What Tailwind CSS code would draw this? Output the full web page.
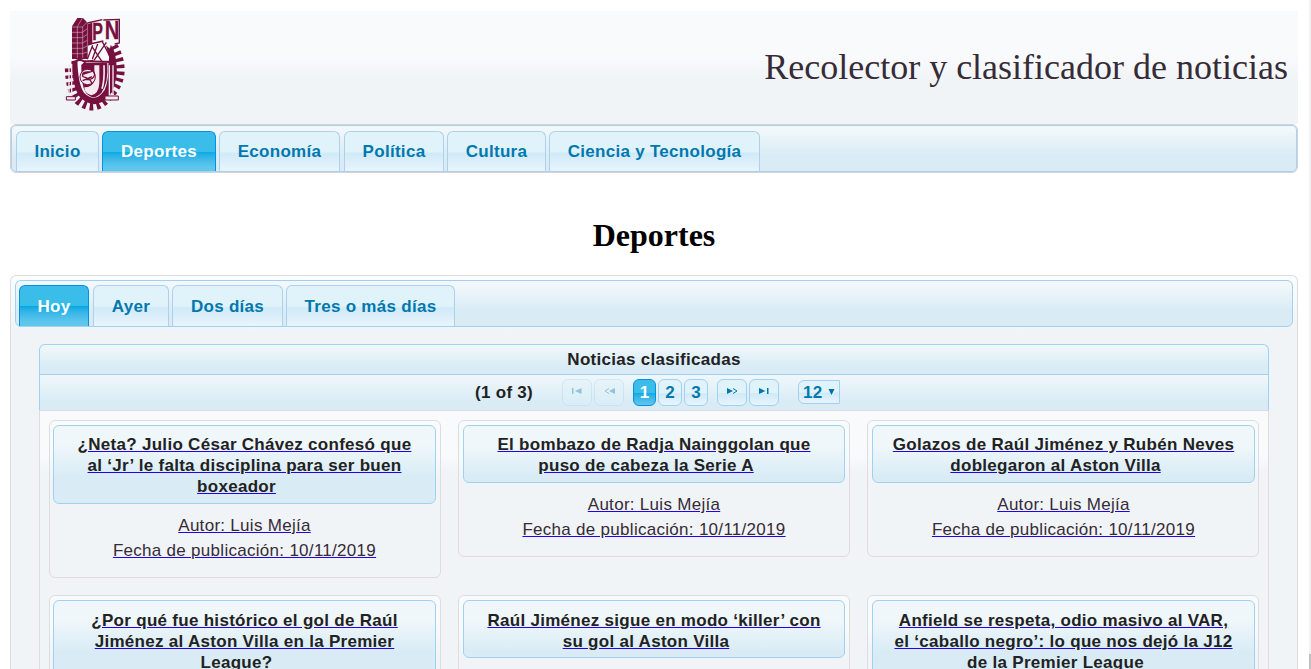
<!DOCTYPE html>
<html lang="es"><head><meta charset="utf-8"><title>Recolector y clasificador de noticias</title>
<script src="https://cdn.jsdelivr.net/npm/@tailwindcss/browser@4"></script></head>
<body class="bg-white w-[1311px] h-[669px] overflow-hidden relative font-['Liberation_Sans',Arial,sans-serif] text-[17px] tracking-[0.29px] text-[#362b36]">
<div class="absolute right-0 top-0 w-[2px] h-full bg-[#f1f1f1]"><div class="mt-[654px] h-[15px] bg-[#c1c1c1]"></div></div>
<div class="ml-[10px] w-[1288px] pt-[11px]">
<header class="h-[113px] flex justify-between bg-linear-to-b from-[#f9fafc] from-40% to-[#f0f4f7] to-62% pl-[40px] pr-[10px]">
<svg class="w-[90px] h-[112px] -mt-[3px] tracking-normal" viewBox="0 0 270 336" fill="none" stroke="#76103f" stroke-width="4">
<path d="M190 114Q236 200 178 262Q136 318 84 276Q60 250 58 180" stroke-width="27" stroke-dasharray="10 10"/>
<path d="M182 110Q196 126 199 165Q207 215 180 262Q136 312 90 268Q68 240 64 160L82 156Q84 230 102 254Q136 288 164 246Q176 220 175 170Z" fill="#76103f" stroke="none"/>
<path d="M160 36L208 34V105L194 108M112 45L157 35M120 108L160 99M128 112L112 154M143 108L127 154M156 99L183 152M126 116L158 164M169 103L132 157" stroke-width="4"/>
<path d="M168 112L190 132L178 150Z" fill="#76103f" stroke="none"/>
<path d="M101 165H172Q176 225 154 255Q130 280 108 255Q92 230 94 170Z" fill="#76103f" stroke="none"/>
<path d="M133 172H148V226Q146 258 124 262Q102 256 103 238Q126 238 133 220Z" fill="#f5eaf0" stroke="none"/>
<path d="M162 172Q164 220 156 242" stroke="#f5eaf0" stroke-width="5"/>
<circle cx="113" cy="207" r="23" fill="#f5eaf0" stroke-width="3"/>
<path d="M130 158Q92 160 103 176Q134 185 134 200Q130 218 106 214M119 192Q92 190 99 206Q122 212 125 225M96 200L126 190M98 218L126 206" stroke-width="4"/>
<path d="M75 163Q84 150 103 160L188 162" stroke-width="6"/>
<path d="M57 168V268M65 168V266M178 172V268M189 172V268" stroke="#f5eaf0" stroke-width="4"/>
<path d="M49 266H76V276H49ZM165 264H205V276H165Z" fill="#f5eaf0" stroke-width="3"/>
<path d="M66 55L82 30H99L113 45V153H66Z" fill="#76103f" stroke="none"/>
<path d="M66 57H97L112 42M66 73H97L112 62M66 89H97L112 79M66 105H97L112 97M66 121H97L112 114M66 137H97L112 132M82 57V150M98 57V150M82 56L97 30" stroke="#e5cddb" stroke-width="1.500"/>
<path d="M114 48L127 44V108L114 113Z" fill="#76103f" stroke="none"/>
<text x="127" y="96" font-family="Liberation Sans" font-weight="bold" font-size="74" fill="#76103f" stroke="#76103f" stroke-width="1" textLength="32" lengthAdjust="spacingAndGlyphs">P</text>
<text x="164" y="94" font-family="Liberation Sans" font-weight="bold" font-size="80" fill="#76103f" stroke="#76103f" stroke-width="1" textLength="44" lengthAdjust="spacingAndGlyphs">N</text>
</svg>
<div class="mt-[34px] text-[36px] leading-[45px] tracking-normal whitespace-nowrap font-['Liberation_Serif',serif]">Recolector y clasificador de noticias</div>
</header>
<nav class="h-[49px] rounded-[6px] border border-[#d0d3d7]"><div class="h-[47px] rounded-[5px] border border-[#aed0ea] bg-linear-to-b from-[#f1f7fa] from-10% to-[#d9ecf6] to-65% pl-[4px] pt-[5px] flex items-start font-bold leading-[20px] text-[#0078ae]">
<div class="w-[83px] mr-[3px] h-[40px] pt-[10px] text-center rounded-t-[6px] border border-b-0 border-[#aed0ea] bg-linear-to-b from-[#e0f3fa] from-50% via-[#d0eaf8] via-55% to-[#e8f4fc]">Inicio</div>
<div class="w-[114px] mr-[3px] h-[40px] pt-[10px] text-center rounded-t-[6px] border border-b-0 border-[#0091e2] text-white bg-linear-to-b from-[#3bbde9] from-50% via-[#00aae4] via-51% to-[#5fc7ec] to-90%">Deportes</div>
<div class="w-[121px] mr-[4px] h-[40px] pt-[10px] text-center rounded-t-[6px] border border-b-0 border-[#aed0ea] bg-linear-to-b from-[#e0f3fa] from-50% via-[#d0eaf8] via-55% to-[#e8f4fc]">Economía</div>
<div class="w-[100px] mr-[3px] h-[40px] pt-[10px] text-center rounded-t-[6px] border border-b-0 border-[#aed0ea] bg-linear-to-b from-[#e0f3fa] from-50% via-[#d0eaf8] via-55% to-[#e8f4fc]">Política</div>
<div class="w-[99px] mr-[3px] h-[40px] pt-[10px] text-center rounded-t-[6px] border border-b-0 border-[#aed0ea] bg-linear-to-b from-[#e0f3fa] from-50% via-[#d0eaf8] via-55% to-[#e8f4fc]">Cultura</div>
<div class="w-[211px] h-[40px] pt-[10px] text-center rounded-t-[6px] border border-b-0 border-[#aed0ea] bg-linear-to-b from-[#e0f3fa] from-50% via-[#d0eaf8] via-55% to-[#e8f4fc]">Ciencia y Tecnología</div>
</div></nav>
<h1 class="mt-[44px] h-[58px] leading-[37px] text-[32px] tracking-normal font-bold text-center text-black font-['Liberation_Serif',serif]">Deportes</h1>
<main class="h-[394px] overflow-hidden rounded-t-[6px] border border-b-0 border-[#dddddd] bg-[#f0f4f7] bg-[linear-gradient(#fbfcfd,#f0f4f7_58px)] px-[4px] pt-[4px]">
<div class="h-[47px] rounded-[6px] border border-[#9fd2f0] bg-linear-to-b from-[#f1f7fa] from-10% to-[#d9ecf6] to-65% pl-[3px] pt-[4px] flex items-start font-bold leading-[20px] text-[#0078ae]">
<div class="w-[70px] mr-[4px] h-[41px] pt-[11px] text-center rounded-t-[6px] border border-b-0 border-[#0091e2] text-white bg-linear-to-b from-[#3bbde9] from-50% via-[#00aae4] via-51% to-[#5fc7ec] to-90%">Hoy</div>
<div class="w-[76px] mr-[3px] h-[41px] pt-[11px] text-center rounded-t-[6px] border border-b-0 border-[#aed0ea] bg-linear-to-b from-[#e0f3fa] from-50% via-[#d0eaf8] via-55% to-[#e8f4fc]">Ayer</div>
<div class="w-[111px] mr-[3px] h-[41px] pt-[11px] text-center rounded-t-[6px] border border-b-0 border-[#aed0ea] bg-linear-to-b from-[#e0f3fa] from-50% via-[#d0eaf8] via-55% to-[#e8f4fc]">Dos días</div>
<div class="w-[169px] h-[41px] pt-[11px] text-center rounded-t-[6px] border border-b-0 border-[#aed0ea] bg-linear-to-b from-[#e0f3fa] from-50% via-[#d0eaf8] via-55% to-[#e8f4fc]">Tres o más días</div>
</div>
<section class="mt-[17px] mx-[24px]">
<div class="h-[30px] rounded-t-[6px] border border-b-0 border-[#9fd2f0] bg-linear-to-b from-[#f1f7fa] to-[#d9ecf6] to-75% text-center font-bold text-[#222] leading-[29px]">Noticias clasificadas</div>
<div class="h-[36px] border border-b-0 border-[#9fd2f0] bg-linear-to-b from-[#f1f7fa] to-[#d9ecf6] to-75% font-bold text-[#0078ae] pl-[435px] pt-[4px] flex items-start leading-[25px]">
<span class="w-[87px] text-[#222] leading-[27px]">(1 of 3)</span>
<span class="w-[30px] h-[27px] mr-[2px] rounded-[6px] border border-[#9fd2f0] bg-[#e0f3fa] opacity-35 flex justify-center pt-[8px]"><svg width="10" height="7"><path d="M0 0h1.500v6H0zM9.500 0v6L3 3z" fill="#0070a3"/></svg></span>
<span class="w-[30px] h-[27px] mr-[9px] rounded-[6px] border border-[#9fd2f0] bg-[#e0f3fa] opacity-35 flex justify-center pt-[8px]"><svg width="11" height="7"><path d="M11 0v6L5 3z" fill="#0070a3"/><path d="M5 .5L1 3l4 2.500" fill="none" stroke="#0070a3"/></svg></span>
<span class="w-[23px] h-[27px] mr-[2px] rounded-[6px] border border-[#0091e2] text-white text-center bg-linear-to-b from-[#3bbde9] from-50% via-[#00aae4] via-51% to-[#5fc7ec]">1</span>
<span class="w-[24px] h-[27px] mr-[2px] rounded-[6px] border border-[#9fd2f0] text-center bg-linear-to-b from-[#e0f3fa] from-50% via-[#d0eaf8] via-55% to-[#e8f4fc]">2</span>
<span class="w-[24px] h-[27px] mr-[9px] rounded-[6px] border border-[#9fd2f0] text-center bg-linear-to-b from-[#e0f3fa] from-50% via-[#d0eaf8] via-55% to-[#e8f4fc]">3</span>
<span class="w-[30px] h-[27px] mr-[2px] rounded-[6px] border border-[#9fd2f0] bg-linear-to-b from-[#e0f3fa] from-50% via-[#d0eaf8] via-55% to-[#e8f4fc] flex justify-center pt-[8px]"><svg width="11" height="7"><path d="M0 0v6l6-3z" fill="#0078ae"/><path d="M6 .5L10 3l-4 2.500" fill="none" stroke="#0078ae"/></svg></span>
<span class="w-[30px] h-[27px] mr-[19px] rounded-[6px] border border-[#9fd2f0] bg-linear-to-b from-[#e0f3fa] from-50% via-[#d0eaf8] via-55% to-[#e8f4fc] flex justify-center pt-[8px]"><svg width="10" height="7"><path d="M0 0v6l6.500-3zM8 0h1.500v6H8z" fill="#0078ae"/></svg></span>
<span class="w-[42px] h-[24px] mt-[1px] pl-[4px] leading-[23px] rounded-l-[6px] border border-[#9fd2f0] flex bg-linear-to-b from-[#e0f3fa] from-50% via-[#d0eaf8] via-55% to-[#e8f4fc]">12<svg class="ml-[5px] mt-[8px]" width="7" height="7"><path d="M.5 0h6L3.500 6z" fill="#0070a3"/></svg></span>
</div>
<div class="border-x border-t border-[#dddddd] h-[360px] bg-[linear-gradient(#f9fafc_45px,#f0f4f7_62px)] px-[9px] pt-[9px] grid grid-cols-[392px_392px_392px] gap-x-[17px] grid-rows-[175px_175px] items-start text-center">
<article class="h-[158px] rounded-[6px] border border-[#dddddd] bg-[linear-gradient(#f9fafc_30px,#f0f4f7_62px)] pl-[3px] pr-[4px] pt-[4px] underline decoration-[#2000f0]"><h2 class="h-[79px] rounded-[6px] border border-[#9fd2f0] bg-linear-to-b from-[#eff7fa] from-25% to-[#d9ecf6] to-65% pt-[8px] leading-[21px] font-bold text-[#222]">¿Neta? Julio César Chávez confesó que<br>al ‘Jr’ le falta disciplina para ser buen<br><span class="mr-[16px]">boxeador</span></h2><div class="pt-[9px] leading-[25px]">Autor: Luis Mejía<br>Fecha de publicación: 10/11/2019</div></article>
<article class="h-[137px] rounded-[6px] border border-[#dddddd] bg-[linear-gradient(#f9fafc_30px,#f0f4f7_62px)] px-[4px] pt-[4px] underline decoration-[#2000f0]"><h2 class="h-[58px] rounded-[6px] border border-[#9fd2f0] bg-[linear-gradient(#eff7fa_20px,#d9ecf6_50px)] pt-[8px] leading-[21px] font-bold text-[#222]">El bombazo de Radja Nainggolan que<br><span class="mr-[16px]">puso de cabeza la Serie A</span></h2><div class="pt-[9px] leading-[25px]">Autor: Luis Mejía<br>Fecha de publicación: 10/11/2019</div></article>
<article class="h-[137px] rounded-[6px] border border-[#dddddd] bg-[linear-gradient(#f9fafc_30px,#f0f4f7_62px)] pl-[4px] pr-[3px] pt-[4px] underline decoration-[#2000f0]"><h2 class="h-[58px] rounded-[6px] border border-[#9fd2f0] bg-[linear-gradient(#eff7fa_20px,#d9ecf6_50px)] pt-[8px] leading-[21px] font-bold text-[#222]">Golazos de Raúl Jiménez y Rubén Neves<br><span class="mr-[16px]">doblegaron al Aston Villa</span></h2><div class="pt-[9px] leading-[25px]">Autor: Luis Mejía<br>Fecha de publicación: 10/11/2019</div></article>
<article class="h-[158px] rounded-[6px] border border-[#dddddd] bg-[linear-gradient(#f9fafc_30px,#f0f4f7_62px)] pl-[3px] pr-[4px] pt-[4px] underline decoration-[#2000f0]"><h2 class="h-[79px] rounded-[6px] border border-[#9fd2f0] bg-linear-to-b from-[#eff7fa] from-25% to-[#d9ecf6] to-65% pt-[9px] leading-[21px] font-bold text-[#222]">¿Por qué fue histórico el gol de Raúl<br>Jiménez al Aston Villa en la Premier<br><span class="mr-[16px]">League?</span></h2></article>
<article class="h-[137px] rounded-[6px] border border-[#dddddd] bg-[linear-gradient(#f9fafc_30px,#f0f4f7_62px)] px-[4px] pt-[4px] underline decoration-[#2000f0]"><h2 class="h-[58px] rounded-[6px] border border-[#9fd2f0] bg-[linear-gradient(#eff7fa_20px,#d9ecf6_50px)] pt-[9px] leading-[21px] font-bold text-[#222]">Raúl Jiménez sigue en modo ‘killer’ con<br><span class="mr-[16px]">su gol al Aston Villa</span></h2></article>
<article class="h-[158px] rounded-[6px] border border-[#dddddd] bg-[linear-gradient(#f9fafc_30px,#f0f4f7_62px)] pl-[4px] pr-[3px] pt-[4px] underline decoration-[#2000f0]"><h2 class="h-[79px] rounded-[6px] border border-[#9fd2f0] bg-linear-to-b from-[#eff7fa] from-25% to-[#d9ecf6] to-65% pt-[9px] leading-[21px] font-bold text-[#222]">Anfield se respeta, odio masivo al VAR,<br>el ‘caballo negro’: lo que nos dejó la J12<br><span class="mr-[16px]">de la Premier League</span></h2></article>
</div></section></main></div></body></html>
